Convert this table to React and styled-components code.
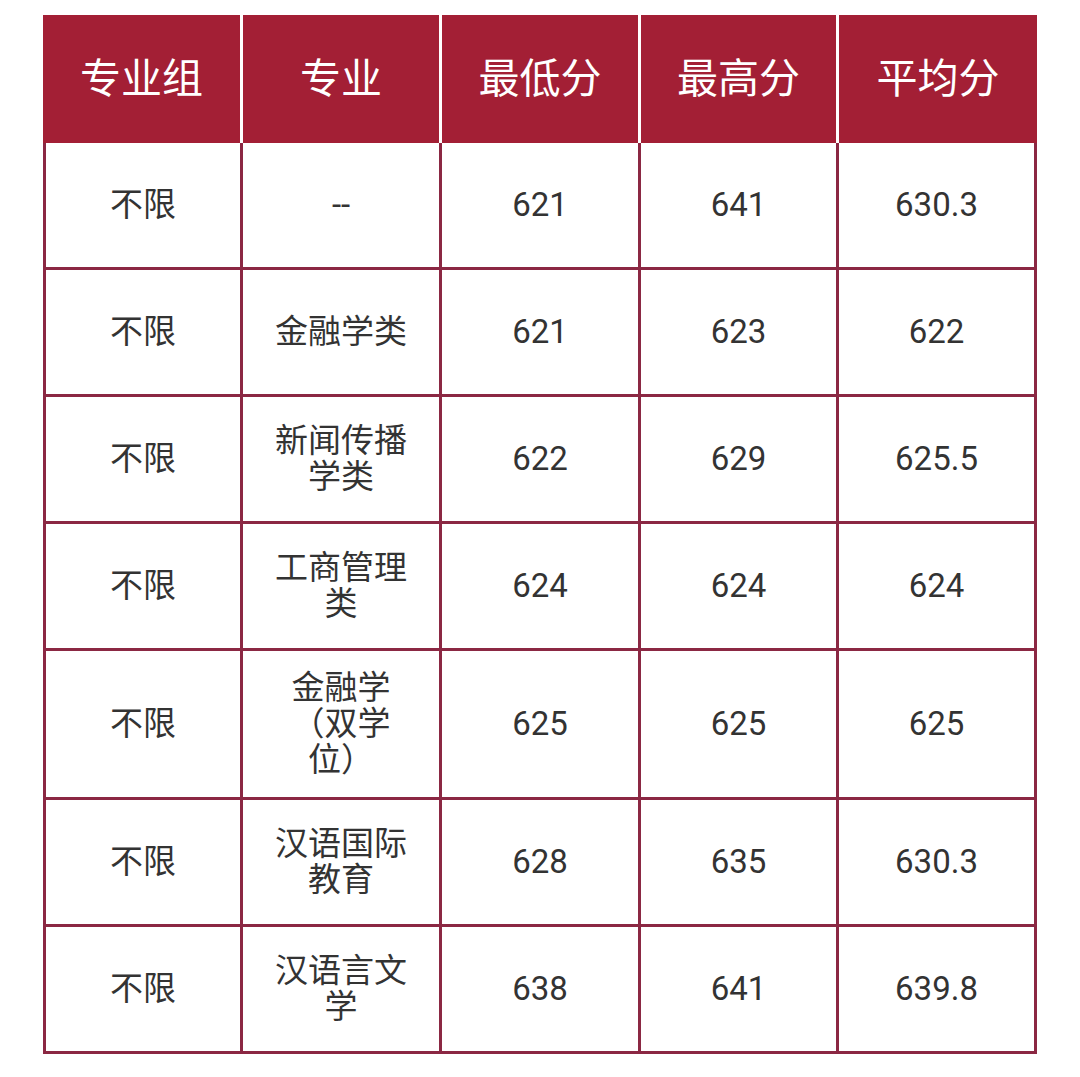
import React from "react";
import styled, { createGlobalStyle } from "styled-components";

const GlobalStyle = createGlobalStyle`
    html, body {
        margin: 0;
        padding: 0;
        background: #ffffff;
    }
`;

const headers = ["专业组", "专业", "最低分", "最高分", "平均分"];
const colWidths = [200, 199, 199, 198, 198];

const rows = [
    { group: "不限", major: "--", min: "621", max: "641", avg: "630.3" },
    { group: "不限", major: "金融学类", min: "621", max: "623", avg: "622" },
    { group: "不限", major: "新闻传播学类", min: "622", max: "629", avg: "625.5" },
    { group: "不限", major: "工商管理类", min: "624", max: "624", avg: "624" },
    { group: "不限", major: "金融学\n（双学\n位）", min: "625", max: "625", avg: "625", tall: true },
    { group: "不限", major: "汉语国际教育", min: "628", max: "635", avg: "630.3" },
    { group: "不限", major: "汉语言文学", min: "638", max: "641", avg: "639.8" },
];

const App = () => {
    return (
        <Page>
            <GlobalStyle />
            <Table>
                <colgroup>
                    {colWidths.map((w, i) => (
                        <col key={i} style={{ width: w }} />
                    ))}
                </colgroup>
                <thead>
                    <tr>
                        {headers.map((h) => (
                            <HeadCell key={h}>{h}</HeadCell>
                        ))}
                    </tr>
                </thead>
                <tbody>
                    {rows.map((r, i) => (
                        <Row key={i} $tall={r.tall}>
                            <Cell>{r.group}</Cell>
                            <Cell $wrap>{r.major}</Cell>
                            <Cell>{r.min}</Cell>
                            <Cell>{r.max}</Cell>
                            <Cell>{r.avg}</Cell>
                        </Row>
                    ))}
                </tbody>
            </Table>
        </Page>
    );
};

export default App;

const Page = styled.div`
    padding: 15px 43px 20px 43px;
    font-family: Roboto, "Noto Sans CJK SC", sans-serif;
`;

const Table = styled.table`
    width: 994px;
    table-layout: fixed;
    border-collapse: separate;
    border-spacing: 0;
`;

const HeadCell = styled.th`
    height: 128px;
    padding: 0 0 9px 0;
    box-sizing: border-box;
    background: #a31f35;
    color: #ffffff;
    font-size: 41px;
    font-weight: 400;
    text-align: center;
    vertical-align: middle;
    border-right: 3px solid #ffffff;

    &:last-child {
        border-right: none;
    }
`;

const Row = styled.tr`
    height: ${(p) => (p.$tall ? "149px" : "127px")};
`;

const Cell = styled.td`
    padding: ${(p) => (p.$wrap ? "0 24px" : "0 8px")};
    box-sizing: border-box;
    text-align: center;
    vertical-align: middle;
    color: #333333;
    font-size: 33px;
    line-height: 36px;
    white-space: ${(p) => (p.$wrap ? "pre-line" : "nowrap")};
    border-right: 3px solid #8b2843;
    border-bottom: 3px solid #8b2843;

    &:first-child {
        border-left: 3px solid #8b2843;
    }
`;
